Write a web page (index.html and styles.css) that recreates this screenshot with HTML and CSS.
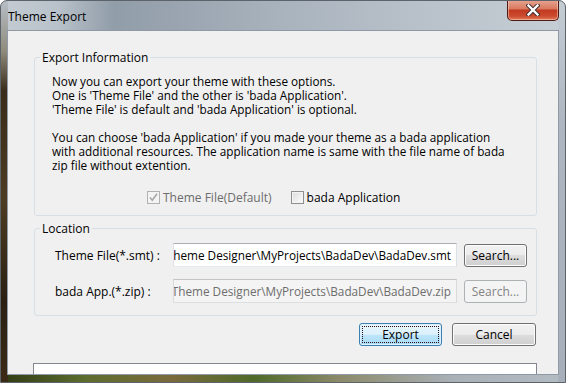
FILE: index.html
```html
<!DOCTYPE html>
<html lang="en">
<head>
    <meta charset="UTF-8">
    <title>Theme Export</title>
    <link rel="stylesheet" href="styles.css">
</head>
<body>

<div class="window">
    <!-- title bar -->
    <div class="titlebar">
        <span class="title">Theme Export</span>
        <div class="close-btn">
            <svg width="14" height="12" viewBox="0 0 14 12">
                <path d="M2.5 1.5 L11.5 10.5 M11.5 1.5 L2.5 10.5" stroke="#3b2a2a" stroke-width="4.2" stroke-linecap="square"/>
                <path d="M2.5 1.5 L11.5 10.5 M11.5 1.5 L2.5 10.5" stroke="#ffffff" stroke-width="2.4" stroke-linecap="square"/>
            </svg>
        </div>
    </div>

    <div class="client">
        <fieldset class="group info-group">
            <legend>Export Information</legend>
            <p class="info-text">Now you can export your theme with these options.<br>One is 'Theme File' and the other is 'bada Application'.<br>'Theme File' is default and 'bada Application' is optional.</p>
            <p class="info-text">You can choose 'bada Application' if you made your theme as a bada application<br>with additional resources. The application name is same with the file name of bada<br>zip file without extention.</p>
            <div class="options">
                <label class="check disabled">
                    <span class="box">
                        <svg width="11" height="11" viewBox="0 0 11 11"><path d="M2 5.5 L4.3 8.2 L9 1.8" fill="none" stroke="#a6a6a6" stroke-width="1.6"/></svg>
                    </span>
                    Theme File(Default)
                </label>
                <label class="check">
                    <span class="box"></span>
                    bada Application
                </label>
            </div>
        </fieldset>

        <fieldset class="group location-group">
            <legend>Location</legend>
            <div class="field-row">
                <span class="field-label">Theme File(*.smt) :</span>
                <div class="textbox"><span>Theme Designer\MyProjects\BadaDev\BadaDev.smt</span></div>
                <button class="btn search-btn">Search...</button>
            </div>
            <div class="field-row">
                <span class="field-label">bada App.(*.zip) :</span>
                <div class="textbox disabled"><span>Theme Designer\MyProjects\BadaDev\BadaDev.zip</span></div>
                <button class="btn search-btn" disabled>Search...</button>
            </div>
        </fieldset>

        <div class="actions">
            <button class="btn default-btn export-btn"><span class="focus-rect">Export</span></button>
            <button class="btn cancel-btn">Cancel</button>
        </div>

        <div class="status-box"></div>
    </div>
</div>

</body>
</html>
```

FILE: styles.css
```css
body {
    margin: 0;
    background-color: #ffffff;
    font-family: 'Open Sans', 'Liberation Sans', sans-serif;
    font-size: 12px;
    color: #000;
}

.window {
    width: 566px;
    height: 383px;
    box-sizing: border-box;
    display: flex;
    flex-direction: column;
    border: 1px solid #5c636b;
    border-radius: 7px 7px 0 0;
    overflow: hidden;
    background:
        linear-gradient(to bottom, #b7bfc7 0, #8f8b7c 50px, #3a2c1a 90px, #4e3c22 200px, #2a2012 300px, #3b2a16 100%) left top / 7px 100% no-repeat,
        linear-gradient(to bottom, #c4ccd4 0, #aeb7c1 120px, #a7b0ba 100%) right top / 7px 100% no-repeat,
        linear-gradient(to right, #2f3a14 0, #5d6d2e 15%, #7a6a3c 30%, #4f6a2a 45%, #8c8a6a 60%, #a9b0b6 80%, #b3bbc3 100%) left bottom / 100% 8px no-repeat,
        linear-gradient(to right, #c4cbd2 0, #b9c2ca 10%, #919da9 20%, #9aa5b1 32%, #a9b3bd 50%, #b6bfc8 70%, #c6ced5 100%);
}

.titlebar {
    height: 29px;
    display: flex;
    align-items: flex-start;
    flex-shrink: 0;
}

.title {
    padding-left: 7px;
    line-height: 31px;
    font-size: 12px;
    color: #000;
}

.close-btn {
    margin-left: auto;
    margin-right: 6px;
    margin-top: -1px;
    width: 52px;
    height: 21px;
    box-sizing: border-box;
    border: 1px solid #4f1a12;
    border-top: none;
    border-radius: 0 0 5px 5px;
    display: flex;
    align-items: center;
    justify-content: center;
    background: linear-gradient(to bottom, #e6a591 0, #d9785f 45%, #c2391f 50%, #cc4b2f 80%, #e27a5c 100%);
    box-shadow: inset 0 0 0 1px rgba(255, 220, 210, 0.5);
}

.client {
    flex: 1;
    margin: 0 6px 7px 6px;
    border: 1px solid #8f9aa6;
    background-color: #f0f0f0;
    display: flex;
    flex-direction: column;
    overflow: hidden;
}

.group {
    margin: 0 21px 0 26px;
    padding: 0 5px;
    border: 1px solid #d5dfe5;
    border-radius: 3px;
    min-width: 0;
}

.group legend {
    padding: 0 2px;
    line-height: 15px;
}

.info-group {
    margin-top: 19px;
    padding-top: 9px;
    padding-bottom: 10px;
}

.info-text {
    margin: 0 0 14px 12px;
    font-size: 11.75px;
    line-height: 14px;
}

.options {
    display: flex;
    align-items: center;
    margin-left: 107px;
    margin-top: 17px;
    height: 16px;
}

.check {
    display: flex;
    align-items: center;
    gap: 3px;
    margin-right: 19px;
}

.check.disabled {
    color: #6d6d6d;
}

.box {
    width: 13px;
    height: 13px;
    box-sizing: border-box;
    border: 1px solid #8e8f8f;
    background: linear-gradient(135deg, #dcdcdc 0, #f0f0f0 60%, #fbfbfb 100%);
    box-shadow: inset 0 0 0 1px #f4f4f4;
    display: flex;
    align-items: center;
    justify-content: center;
}

.check.disabled .box {
    border-color: #b1b1b1;
    background: #f4f4f4;
    box-shadow: none;
}

.location-group {
    margin-top: 5px;
    padding-top: 7px;
    padding-bottom: 12px;
}

.field-row {
    display: flex;
    align-items: center;
    height: 24px;
    margin-left: 15px;
}

.field-row + .field-row {
    margin-top: 12px;
}

.field-label {
    width: 118px;
    flex-shrink: 0;
    white-space: nowrap;
}

.textbox {
    width: 284px;
    height: 24px;
    box-sizing: border-box;
    border: 1px solid;
    border-color: #abadb3 #dbdfe6 #e3e9ef #e2e3ea;
    background-color: #fff;
    display: flex;
    align-items: center;
    justify-content: flex-end;
    overflow: hidden;
    padding-right: 5px;
    white-space: nowrap;
    font-size: 11.75px;
}

.textbox.disabled {
    background-color: #f4f4f4;
    border-color: #c2c4c8 #d8dadd #dcdfe2 #d8dadd;
    color: #6d6d6d;
}

.btn {
    height: 23px;
    box-sizing: border-box;
    border: 1px solid #707070;
    border-radius: 3px;
    padding: 0;
    font-family: 'Open Sans', 'Liberation Sans', sans-serif;
    font-size: 12px;
    color: #000;
    background: linear-gradient(to bottom, #f2f2f2 0, #ebebeb 50%, #dddddd 50%, #cfcfcf 100%);
    box-shadow: inset 0 0 0 1px #fcfcfc;
}

.btn:disabled {
    border-color: #adb2b5;
    background: #f4f4f4;
    color: #838383;
    box-shadow: none;
}

.search-btn {
    width: 63px;
    margin-left: 7px;
}

.actions {
    display: flex;
    justify-content: flex-end;
    gap: 10px;
    margin: 7px 22px 0 0;
}

.export-btn {
    width: 83px;
}

.cancel-btn {
    width: 84px;
}

.default-btn {
    border-color: #3c7fb1;
    background: linear-gradient(to bottom, #eaf6fd 0, #d9f0fc 50%, #bee6fd 50%, #a7d9f5 100%);
    box-shadow: inset 0 0 0 1px #ddf0fb;
    display: flex;
    padding: 2px;
}

.focus-rect {
    flex: 1;
    border: 1px dotted #2a1010;
    display: flex;
    align-items: center;
    justify-content: center;
}

.status-box {
    margin: 17px 21px 0 25px;
    height: 20px;
    flex-shrink: 0;
    border: 1px solid #828790;
    background-color: #fff;
}
```
